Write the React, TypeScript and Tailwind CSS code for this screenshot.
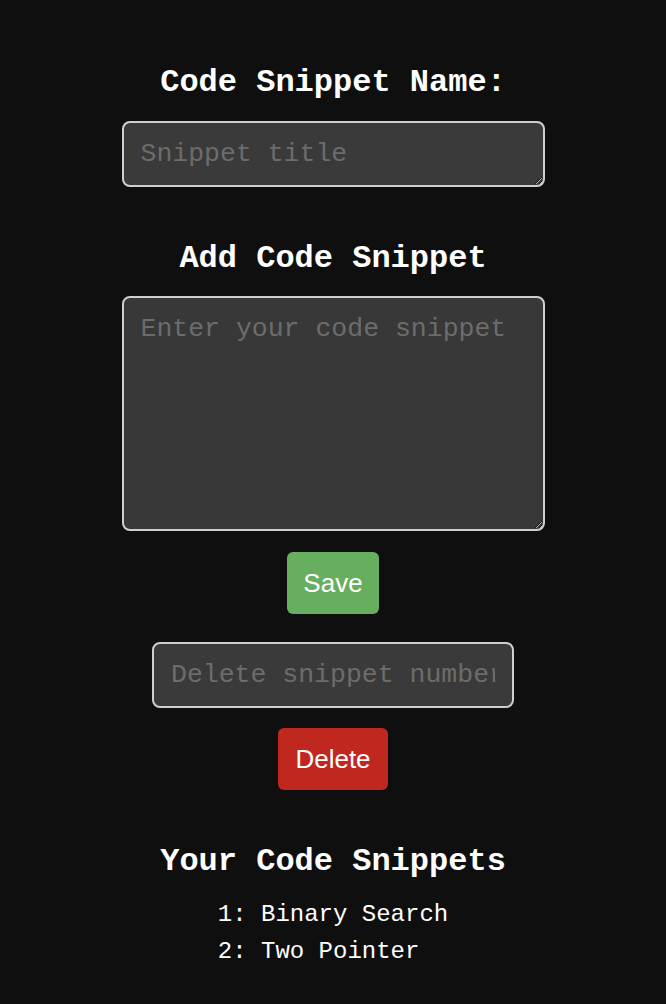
const SNIPPETS = ["Binary Search", "Two Pointer"];

const fieldClass =
  "block rounded-[8px] border-2 border-[#cfcfcf] bg-[#3a3a3a] px-[17px] text-[26.5px] text-white outline-none placeholder:text-[#6c6c6c] font-['Liberation_Mono',monospace]";

export default function App() {
  return (
    <div className="min-h-[1004px] w-full bg-[#0f0f0f] font-['Liberation_Mono',monospace] text-white">
      <div className="flex flex-col items-center pb-10">
        <h1 className="mt-[63px] text-[32px] font-bold leading-[40px]">Code Snippet Name:</h1>
        <textarea
          placeholder="Snippet title"
          className={`${fieldClass} mt-[18px] h-[66px] w-[423px] py-[14px] leading-[34px]`}
        />

        <h2 className="mt-[52px] text-[32px] font-bold leading-[40px]">Add Code Snippet</h2>
        <textarea
          placeholder="Enter your code snippet"
          className={`${fieldClass} mt-[17px] h-[235px] w-[423px] bg-[#383838] py-[13px] leading-[36px]`}
        />

        <button className="mt-[21px] h-[62px] w-[92px] rounded-[6px] bg-[#67ae5f] font-['Liberation_Sans',Arial,sans-serif] text-[26px] text-white">
          Save
        </button>

        <input
          type="text"
          placeholder="Delete snippet number"
          className={`${fieldClass} mt-[28px] h-[66px] w-[362px] leading-[34px]`}
        />

        <button className="mt-[20px] h-[62px] w-[110px] rounded-[6px] bg-[#c0281f] font-['Liberation_Sans',Arial,sans-serif] text-[26px] text-white">
          Delete
        </button>

        <h2 className="mt-[52px] text-[32px] font-bold leading-[40px]">Your Code Snippets</h2>
        <ul className="mt-[14px] text-[24px] leading-[37px]">
          {SNIPPETS.map((name, i) => (
            <li key={name}>
              {i + 1}: {name}
            </li>
          ))}
        </ul>
      </div>
    </div>
  );
}
